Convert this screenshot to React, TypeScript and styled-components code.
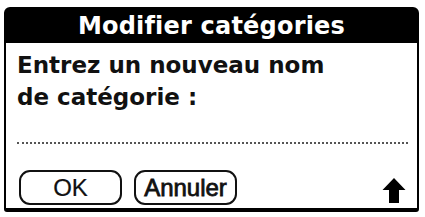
import React from 'react';
import styled, { createGlobalStyle } from 'styled-components';

const GlobalStyle = createGlobalStyle`
  html, body {
    margin: 0;
    padding: 0;
    background: #ffffff;
  }
  body {
    font-family: "DejaVu Sans", "Liberation Sans", sans-serif;
  }
`;

const Dialog = styled.div`
  box-sizing: border-box;
  margin: 7px 0 0 4px;
  width: 415px;
  height: 205px;
  border: 2px solid #000;
  border-bottom-width: 4px;
  border-radius: 6px 6px 3px 3px;
  display: flex;
  flex-direction: column;
  background: #fff;
`;

const TitleBar = styled.div`
  height: 34px;
  background: #000;
  color: #fff;
  display: flex;
  align-items: center;
  justify-content: center;
  font-weight: bold;
  font-size: 24px;
  letter-spacing: 0.2px;
`;

const Body = styled.div`
  flex: 1;
  display: flex;
  flex-direction: column;
  padding: 6px 9px 0 11px;
`;

const Prompt = styled.div`
  font-weight: bold;
  font-size: 23px;
  line-height: 32px;
  color: #111;
`;

const Field = styled.div`
  margin-top: 29px;
  height: 0;
  border-bottom: 2px dotted #555;
`;

const Footer = styled.div`
  margin-top: auto;
  margin-bottom: 3px;
  display: flex;
  align-items: center;
  gap: 12px;
`;

const Button = styled.button<{ $heavy?: boolean }>`
  box-sizing: border-box;
  width: 103px;
  height: 35px;
  margin-left: ${p => (p.$heavy ? '0' : '2px')};
  border: 2px solid #111;
  border-radius: 11px;
  background: #fff;
  font-family: "Liberation Sans", Arial, sans-serif;
  font-size: 24px;
  font-weight: normal;
  -webkit-text-stroke: ${p => (p.$heavy ? '0.8px' : '0.2px')} #111;
  color: #111;
  padding: 0;
  line-height: 1;
`;

const ShiftIcon = styled.svg`
  margin-left: auto;
  margin-right: 2px;
  margin-top: 6px;
`;

export default function App() {
  return (
    <>
      <GlobalStyle />
      <Dialog>
        <TitleBar>Modifier catégories</TitleBar>
        <Body>
          <Prompt>
            Entrez un nouveau nom
            <br />
            de catégorie :
          </Prompt>
          <Field />
          <Footer>
            <Button>OK</Button>
            <Button $heavy>Annuler</Button>
            <ShiftIcon width="24" height="27" viewBox="0 0 24 27">
              <path d="M12 1 L23.5 13 L17 13 L17 26 L7 26 L7 13 L0.5 13 Z" fill="#000" />
            </ShiftIcon>
          </Footer>
        </Body>
      </Dialog>
    </>
  );
}
